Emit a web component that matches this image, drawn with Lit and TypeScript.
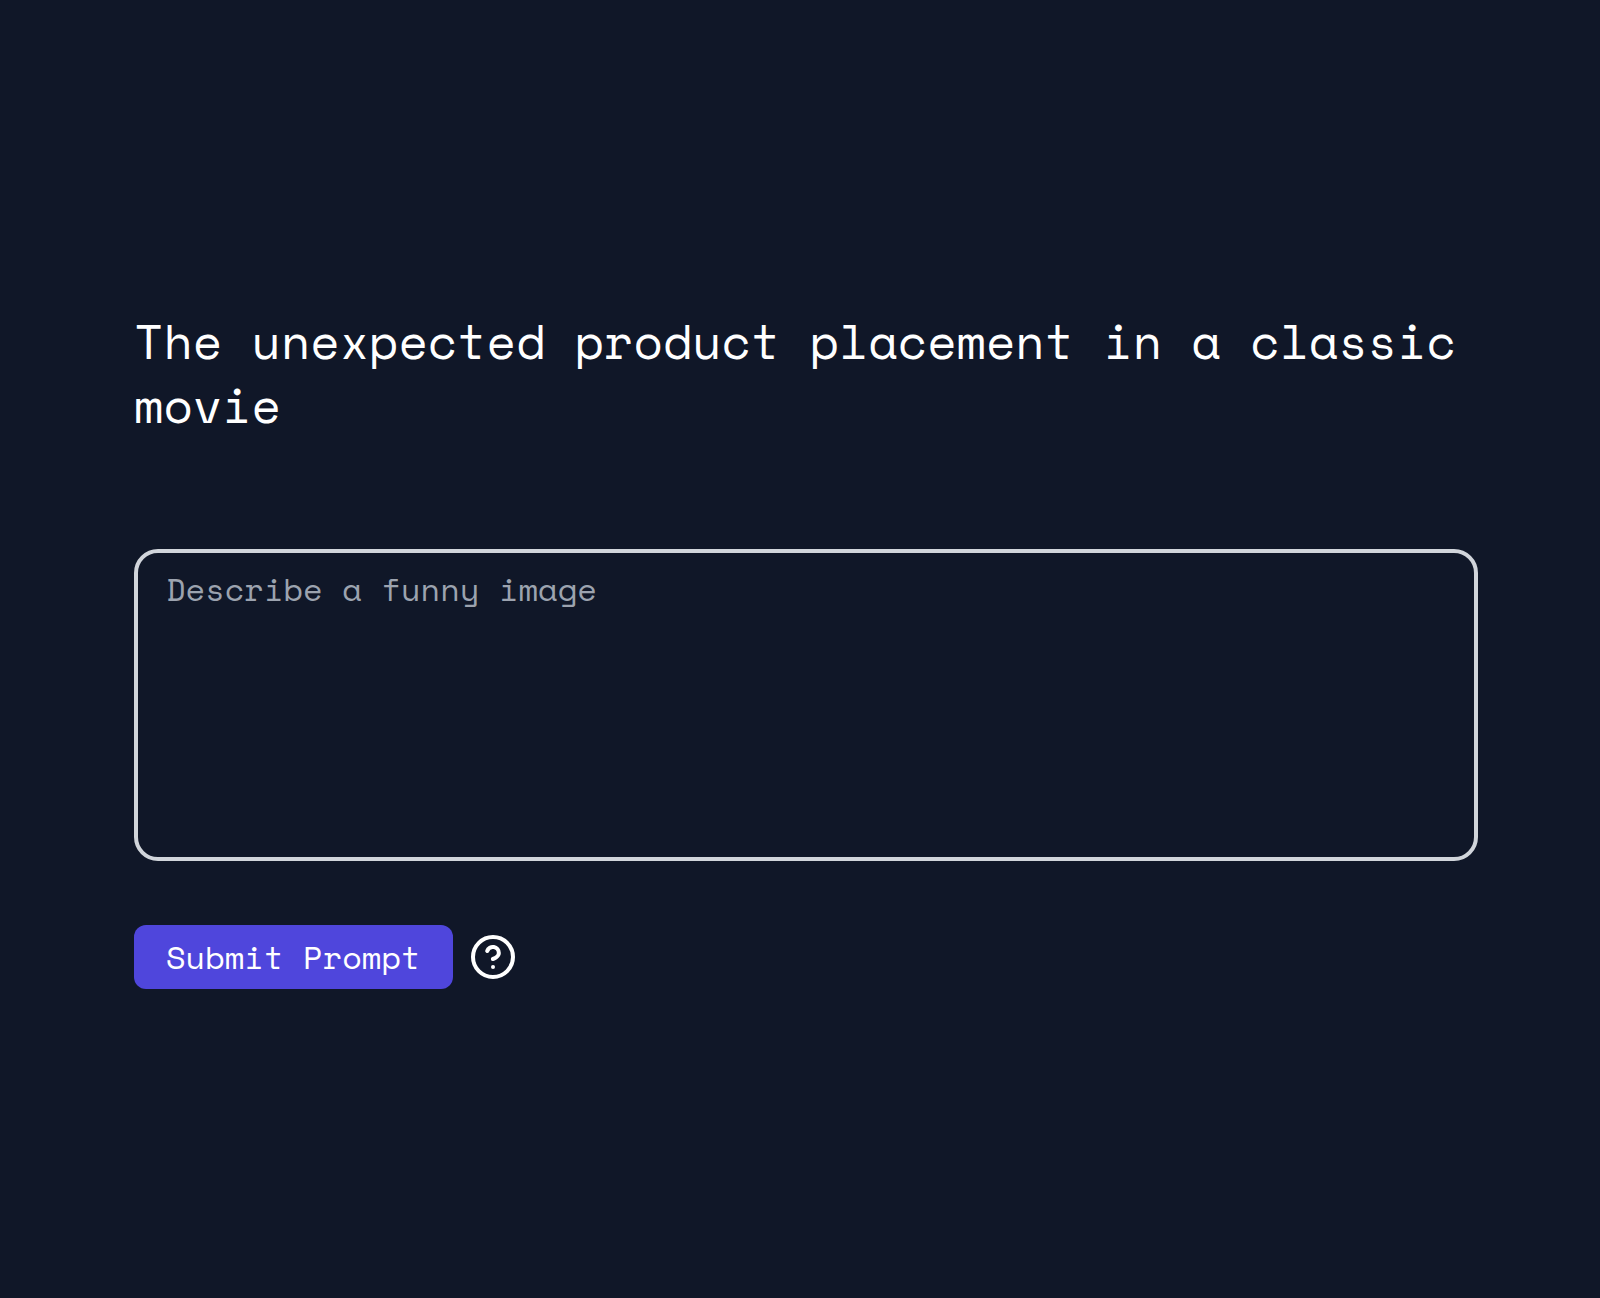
import { LitElement, html, css } from "lit";
import { customElement, property } from "lit/decorators.js";

@customElement("help-icon")
export class HelpIcon extends LitElement {
  static styles = css`
    :host {
      display: block;
      width: 48px;
      height: 48px;
      color: #ffffff;
    }
    .icon {
      display: block;
      width: 100%;
      height: 100%;
    }
  `;

  render() {
    return html`
      <svg class="icon" viewBox="0 0 24 24" fill="none" stroke="currentColor"
        stroke-width="2" stroke-linecap="round" stroke-linejoin="round" aria-hidden="true">
        <circle cx="12" cy="12" r="10"></circle>
        <path d="M9.09 9a3 3 0 0 1 5.83 1c0 2-3 3-3 3"></path>
        <path d="M12 17h.01"></path>
      </svg>
    `;
  }
}

@customElement("app-root")
export class AppRoot extends LitElement {
  @property() question = "The unexpected product placement in a classic movie";

  static styles = css`
    :host {
      display: block;
      font-family: "Space Mono", "Liberation Mono", monospace;
    }
    .page {
      box-sizing: border-box;
      min-height: 100vh;
      padding: 309px 122px 0 134px;
      background: #101728;
      color: #ffffff;
      display: flex;
      flex-direction: column;
    }
    .title {
      margin: 0;
      font-size: 48px;
      line-height: 64px;
      font-weight: 400;
    }
    .prompt {
      box-sizing: border-box;
      display: block;
      width: 100%;
      height: 312px;
      margin: 112px 0 64px;
      padding: 12px 28px;
      border: 4px solid #d1d5db;
      border-radius: 24px;
      background: transparent;
      color: #ffffff;
      font-family: inherit;
      font-size: 32px;
      line-height: 48px;
      resize: none;
      outline: none;
    }
    .prompt::placeholder {
      color: #9ca3af;
      opacity: 1;
    }
    .actions {
      display: flex;
      align-items: center;
      gap: 16px;
    }
    .submit {
      box-sizing: border-box;
      height: 64px;
      padding: 0 32px;
      border: 0;
      border-radius: 12px;
      background: #4f46dc;
      color: #ffffff;
      font-family: inherit;
      font-size: 32px;
      line-height: 64px;
      white-space: nowrap;
    }
  `;

  render() {
    return html`
      <main class="page">
        <h1 class="title">${this.question}</h1>
        <textarea class="prompt" placeholder="Describe a funny image"></textarea>
        <div class="actions">
          <button class="submit" type="button">Submit Prompt</button>
          <help-icon></help-icon>
        </div>
      </main>
    `;
  }
}
